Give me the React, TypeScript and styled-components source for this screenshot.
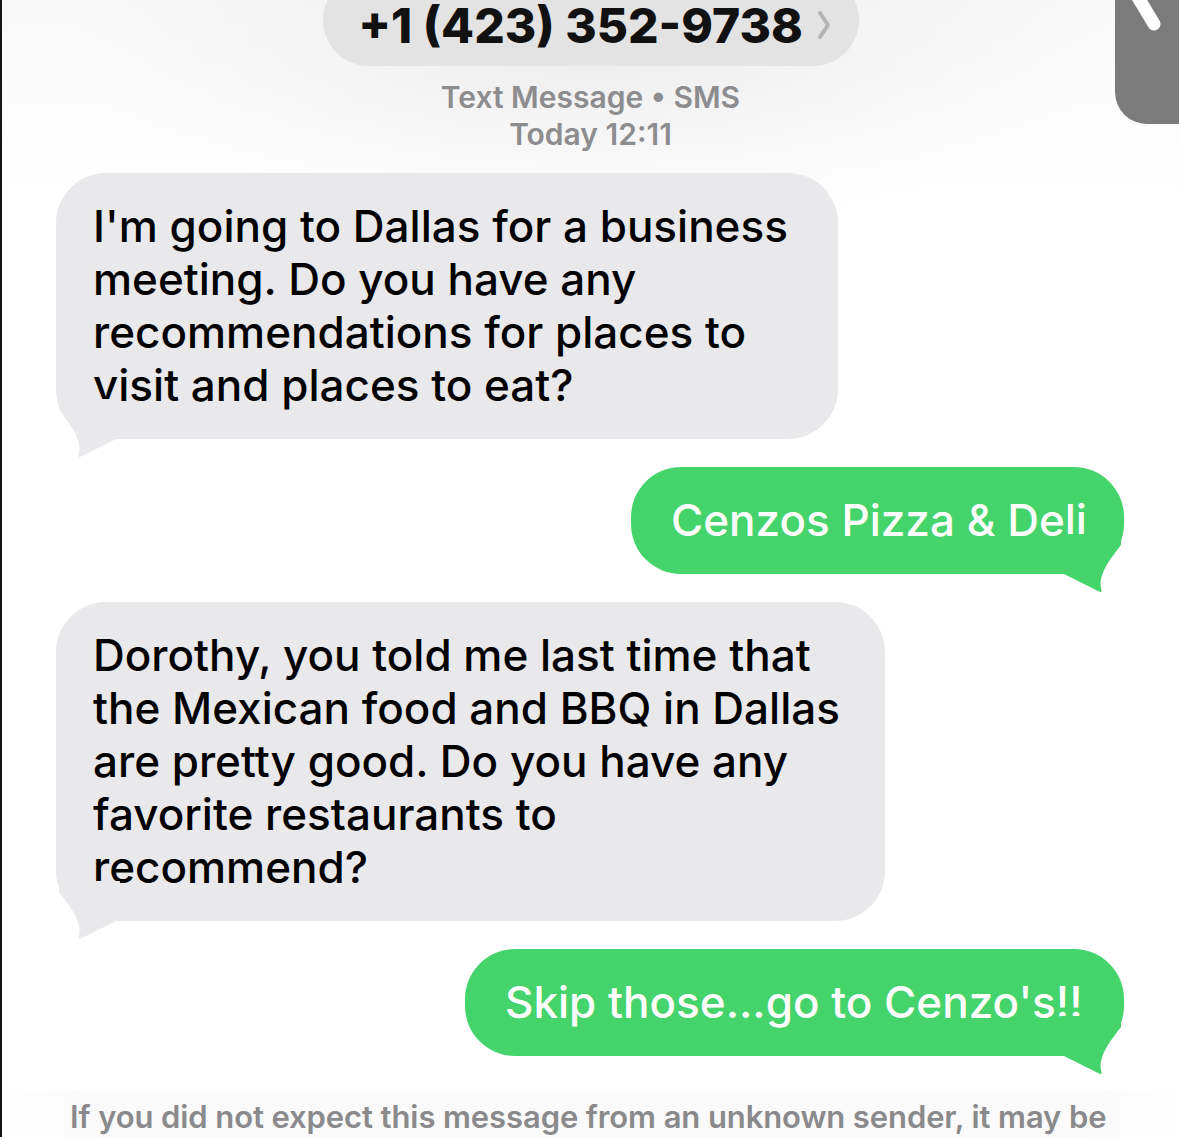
import React from "react";
import styled, { createGlobalStyle } from "styled-components";

const GlobalStyle = createGlobalStyle`
  html, body { margin: 0; padding: 0; background: #ffffff; }
  body { font-family: Inter, "Noto Sans", sans-serif; -webkit-font-smoothing: antialiased; }
`;

const Page = styled.div`
  position: relative;
  width: 1179px;
  height: 1137px;
  box-sizing: border-box;
  overflow: hidden;
  border-left: 2px solid #141414;
  background:
    radial-gradient(ellipse 520px 190px at 590px 40px, #ececec 0%, rgba(240,240,240,0.6) 45%, rgba(255,255,255,0) 100%),
    linear-gradient(#f8f8f8 0px, #ffffff 190px);
  display: flex;
  flex-direction: column;
`;

const Header = styled.header`
  display: flex;
  flex-direction: column;
  align-items: center;
`;

const NumberPill = styled.div`
  margin-top: -26px;
  height: 92px;
  width: 536px;
  box-sizing: border-box;
  border-radius: 46px;
  background: #e3e3e3;
  display: flex;
  align-items: flex-end;
  justify-content: center;
  gap: 14px;
  padding: 0 0 16px 8px;
`;

const NumberText = styled.span`
  font-size: 48px;
  line-height: 48px;
  font-weight: 800;
  color: #111111;
  letter-spacing: 0;
`;

const Chevron = styled.svg`
  width: 14px;
  height: 30px;
  margin-bottom: 10px;
`;

const Meta = styled.div`
  margin-top: 13px;
  font-size: 30px;
  line-height: 37px;
  font-weight: 600;
  color: #8d8d8f;
  text-align: center;
`;

const Thread = styled.main`
  display: flex;
  flex-direction: column;
  gap: 28px;
  padding: 20px 55px 0 54px;
`;

const Row = styled.div<{ $out?: boolean }>`
  display: flex;
  justify-content: ${(p) => (p.$out ? "flex-end" : "flex-start")};
`;

const Bubble = styled.div<{ $out?: boolean; $w: number }>`
  position: relative;
  width: ${(p) => p.$w}px;
  box-sizing: border-box;
  padding: 27px 0 27px ${(p) => (p.$out ? 40 : 37)}px;
  border-radius: 50px;
  background: ${(p) => (p.$out ? "#45d36b" : "#e9e9eb")};
  color: ${(p) => (p.$out ? "#ffffff" : "#000000")};
  font-size: 44px;
  line-height: 53px;
  font-weight: 500;
  letter-spacing: 0;
  white-space: nowrap;
`;

const Tail = styled.svg<{ $out?: boolean }>`
  position: absolute;
  bottom: -20px;
  width: 64px;
  height: 60px;
  ${(p) => (p.$out ? "right: 0;" : "left: 0; transform: scaleX(-1);")}
`;

const Footer = styled.div`
  margin-top: 35px;
  padding: 6px 0 20px 68px;
  font-size: 31px;
  line-height: 40px;
  font-weight: 600;
  color: #8a8a8c;
  letter-spacing: -0.1px;
  white-space: nowrap;
  background: linear-gradient(90deg, rgba(250,250,250,0) 0%, #fafafa 8%, #fafafa 92%, rgba(250,250,250,0) 100%);
`;

const CornerButton = styled.div`
  position: absolute;
  top: 0;
  right: 0;
  width: 64px;
  height: 124px;
  background: #7b7b7b;
  border-bottom-left-radius: 32px;
`;

const CornerStroke = styled.svg`
  position: absolute;
  top: 0;
  left: 0;
  width: 64px;
  height: 60px;
`;

function BubbleTail({ out, color }: { out?: boolean; color: string }) {
  return (
    <Tail $out={out} viewBox="0 0 64 60">
      <path d="M4 40 L38 57 Q43 60 41 54 Q37 40 61 11 L61 0 L0 0 Z" fill={color} />
    </Tail>
  );
}

function Message({ out, width, lines }: { out?: boolean; width: number; lines: string[] }) {
  return (
    <Row $out={out}>
      <Bubble $out={out} $w={width}>
        {lines.map((l, i) => (
          <div key={i}>{l}</div>
        ))}
        <BubbleTail out={out} color={out ? "#45d36b" : "#e9e9eb"} />
      </Bubble>
    </Row>
  );
}

export default function App() {
  return (
    <>
      <GlobalStyle />
      <Page>
        <Header>
          <NumberPill>
            <NumberText>+1 (423) 352-9738</NumberText>
            <Chevron viewBox="0 0 14 30">
              <path d="M3 3 L11 15 L3 27" fill="none" stroke="#b4b4b6" strokeWidth="4" strokeLinecap="round" strokeLinejoin="round" />
            </Chevron>
          </NumberPill>
          <Meta>
            Text Message • SMS
            <br />
            Today 12:11
          </Meta>
        </Header>
        <Thread>
          <Message
            width={782}
            lines={[
              "I'm going to Dallas for a business",
              "meeting. Do you have any",
              "recommendations for places to",
              "visit and places to eat?",
            ]}
          />
          <Message out width={493} lines={["Cenzos Pizza & Deli"]} />
          <Message
            width={829}
            lines={[
              "Dorothy, you told me last time that",
              "the Mexican food and BBQ in Dallas",
              "are pretty good. Do you have any",
              "favorite restaurants to",
              "recommend?",
            ]}
          />
          <Message out width={659} lines={["Skip those...go to Cenzo's!!"]} />
        </Thread>
        <Footer>If you did not expect this message from an unknown sender, it may be</Footer>
        <CornerButton>
          <CornerStroke viewBox="0 0 64 60">
            <path d="M21 -6 L39 24" stroke="#ffffff" strokeWidth="13" strokeLinecap="round" />
          </CornerStroke>
        </CornerButton>
      </Page>
    </>
  );
}
